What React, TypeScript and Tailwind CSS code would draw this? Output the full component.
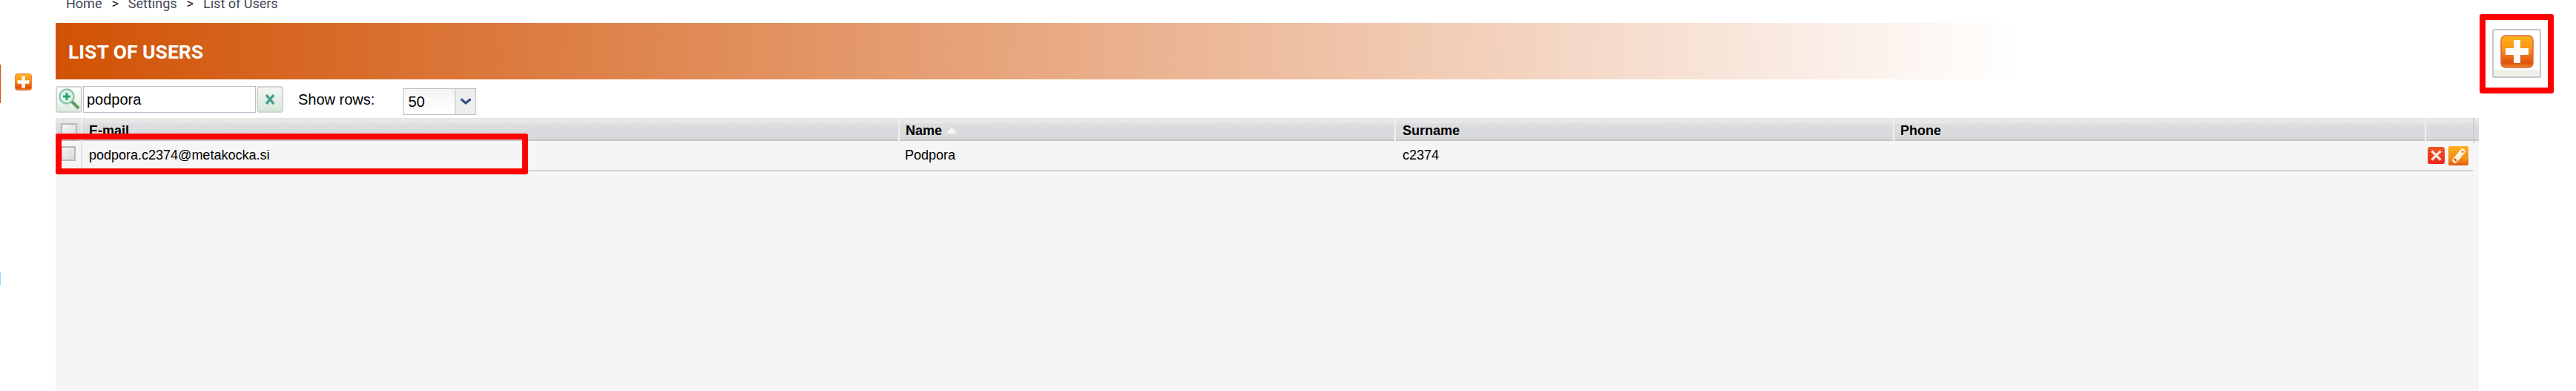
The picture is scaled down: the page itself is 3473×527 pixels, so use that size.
import React from "react";

const columns = "grid grid-cols-[34px_1102px_669px_672px_717px_65px_8px]";

function PlusIcon({ id, size }: { id: string; size: number }) {
  return (
    <svg width={size} height={size} viewBox="0 0 45 45" className="block">
      <defs>
        <linearGradient id={id} x1="0" y1="0" x2="0" y2="1">
          <stop offset="0" stopColor="#ffb316" />
          <stop offset="0.42" stopColor="#f8951c" />
          <stop offset="0.8" stopColor="#e2580f" />
          <stop offset="0.86" stopColor="#dc5208" />
          <stop offset="1" stopColor="#f08a2a" />
        </linearGradient>
      </defs>
      <rect x="1" y="1" width="43" height="43" rx="6" fill={`url(#${id})`} stroke="#e0663c" strokeWidth="1.5" />
      <path d="M18 7h9v11h11v9H27v11h-9V27H7v-9h11z" fill="#fffdf8" />
    </svg>
  );
}

function Checkbox({ size }: { size: string }) {
  return (
    <div className={`${size} border-2 border-[#b9b9b9] bg-gradient-to-br from-[#f4f4f4] to-[#d8d9dc]`} />
  );
}

export default function App() {
  return (
    <div className="flex h-[527px] w-[3473px] overflow-hidden bg-white font-['Liberation_Sans',Arial,sans-serif] text-black">
      <aside className="flex w-[75px] shrink-0 flex-col">
        <div className="mt-[87px] flex h-[52px] items-center">
          <div className="h-full w-[1px] bg-[#d15204]" />
          <div className="ml-[19px] mb-[5px]">
            <PlusIcon id="side-plus" size={23} />
          </div>
        </div>
        <div className="mt-[228px] h-[17px] w-[1px] bg-[#8fdcff]" />
      </aside>

      <main className="flex w-[3267px] shrink-0 flex-col">
        <nav className="flex h-[31px] items-start gap-[13px] font-['Roboto',sans-serif] text-[18px] leading-[10px] text-[#3f4654] pl-[14px]">
          <span>Home</span>
          <span className="text-[#222]">&gt;</span>
          <span>Settings</span>
          <span className="text-[#222]">&gt;</span>
          <span>List of Users</span>
        </nav>

        <header className="flex h-[76px] items-center bg-[linear-gradient(to_right,#d15204_0%,#ffffff_81%)] pl-[17px] pt-[2px] font-['Roboto',sans-serif] text-[26.5px] font-bold text-white">
          LIST OF USERS
        </header>

        <div className="flex h-[52px] items-start pt-[9px]">
          <button className="flex h-[36px] w-[36px] items-center justify-center rounded-[4px] border-2 border-[#d3d3d3] bg-gradient-to-b from-white to-[#dfeadf]">
            <svg width="32" height="32" viewBox="0 0 32 32">
              <circle cx="13" cy="12" r="9.500" fill="#e4f4ec" stroke="#8cc9ad" strokeWidth="2.500" />
              <path d="M13 7v10M8 12h10" stroke="#22a56c" strokeWidth="3" />
              <path d="M20 19l9 9" stroke="#5d9b62" strokeWidth="4" />
            </svg>
          </button>
          <input
            readOnly
            value="podpora"
            className="ml-[1px] h-[36px] w-[233px] border border-[#b8bccb] bg-white pl-[4px] text-[20px] text-black outline-none"
          />
          <button className="ml-[1px] flex h-[36px] w-[36px] items-center justify-center rounded-[4px] border-2 border-[#d3d3d3] bg-gradient-to-b from-[#f3f6f3] to-[#d6e8d8]">
            <svg width="16" height="16" viewBox="0 0 16 16">
              <path d="M3 2l10 12M13 2L3 14" stroke="#44a08d" strokeWidth="3.500" />
            </svg>
          </button>
          <span className="ml-[20px] mt-[7px] text-[20px] leading-[23px]">Show rows:</span>
          <div className="ml-[38px] mt-[3px] flex h-[36px] w-[99px] border border-[#b8bccb]">
            <span className="flex-1 bg-gradient-to-b from-[#f5f5f5] to-white pl-[6px] text-[20px] leading-[34px]">50</span>
            <span className="flex w-[28px] items-center justify-center border-l border-[#b8bccb] bg-[#eeeeee]">
              <svg width="16" height="10" viewBox="0 0 16 10">
                <path d="M1.500 1.500L8 7l6.500-5.500" fill="none" stroke="#34508c" strokeWidth="3.200" />
              </svg>
            </span>
          </div>
        </div>

        <div className="relative flex-1 bg-[#f5f5f5]">
          <div className={`${columns} h-[31px] border-b-2 border-[#c6c6c6] bg-[linear-gradient(to_bottom,#e7e7e7_0%,#e7e7e7_25%,#dddee1_26%,#d7d8da_100%)] text-[18px] font-bold leading-[34px]`}>
            <div className="flex justify-center pt-[7px] pl-[1px]">
              <Checkbox size="h-[24px] w-[22px]" />
            </div>
            <div className="border-l-2 border-[#f0f0f0] pl-[9px]">E-mail</div>
            <div className="flex items-start gap-[6px] border-l-2 border-[#f0f0f0] pl-[8px]">
              Name
              <svg width="14" height="8" viewBox="0 0 14 8" className="mt-[13px]">
                <path d="M7 0l7 8H0z" fill="#f7f7f7" />
              </svg>
            </div>
            <div className="border-l-2 border-[#f0f0f0] pl-[9px]">Surname</div>
            <div className="border-l-2 border-[#f0f0f0] pl-[8px]">Phone</div>
            <div className="border-l-2 border-[#f0f0f0]" />
            <div className="border-l-2 border-[#cfcfcf]" />
          </div>

          <div className={`${columns} h-[38px] text-[18px] leading-[39px]`}>
            <div className="flex justify-center border-b-2 border-[#cfcfcf] pt-[7px]">
              <Checkbox size="h-[20px] w-[20px]" />
            </div>
            <div className="border-b-2 border-l-2 border-b-[#cfcfcf] border-l-[#e4e4e4] pl-[9px]">podpora.c2374@metakocka.si</div>
            <div className="border-b-2 border-[#cfcfcf] pl-[9px]">Podpora</div>
            <div className="border-b-2 border-[#cfcfcf] pl-[11px]">c2374</div>
            <div className="border-b-2 border-[#cfcfcf]" />
            <div className="flex items-start gap-[5px] border-b-2 border-[#cfcfcf] pl-[4px] pt-[7px]">
              <svg width="23" height="23" viewBox="0 0 23 23" className="mt-[1px] shrink-0">
                <defs>
                  <linearGradient id="del" x1="0" y1="0" x2="0" y2="1">
                    <stop offset="0" stopColor="#f2561f" />
                    <stop offset="1" stopColor="#e8261c" />
                  </linearGradient>
                </defs>
                <rect width="23" height="23" rx="3" fill="url(#del)" />
                <path d="M5.500 5.500l12 12M17.500 5.500l-12 12" stroke="#fde6dc" strokeWidth="3.200" />
              </svg>
              <svg width="27" height="26" viewBox="0 0 27 26" className="shrink-0">
                <defs>
                  <linearGradient id="edit" x1="0" y1="0" x2="0" y2="1">
                    <stop offset="0" stopColor="#ffb01c" />
                    <stop offset="0.7" stopColor="#f28a1a" />
                    <stop offset="1" stopColor="#dd5a10" />
                  </linearGradient>
                </defs>
                <rect width="27" height="26" rx="2" fill="url(#edit)" />
                <path d="M9 19L19 7" stroke="#fdf3e4" strokeWidth="7" strokeLinecap="round" />
                <path d="M7.500 17l3.500 3" stroke="#e25b1a" strokeWidth="2.500" />
                <circle cx="19" cy="7.500" r="1.700" fill="#ef8a3a" />
              </svg>
            </div>
            <div />
          </div>

          <div className="absolute left-0 top-[21px] h-[55px] w-[637px] rounded-[3px] border-[8px] border-[#ff0000]" />
        </div>
      </main>

      <aside className="flex-1 pt-[19px] pl-[1px]">
        <div className="flex h-[107px] w-[100px] items-center justify-center rounded-[3px] border-[8px] border-[#ff0000] pb-[1px]">
          <button className="flex h-[66px] w-[66px] items-start justify-center rounded-[3px] border-2 border-[#c4c7c6] bg-gradient-to-b from-white from-85% to-[#eef0ea] to-85% pt-[6px]">
            <PlusIcon id="add-plus" size={45} />
          </button>
        </div>
      </aside>
    </div>
  );
}
